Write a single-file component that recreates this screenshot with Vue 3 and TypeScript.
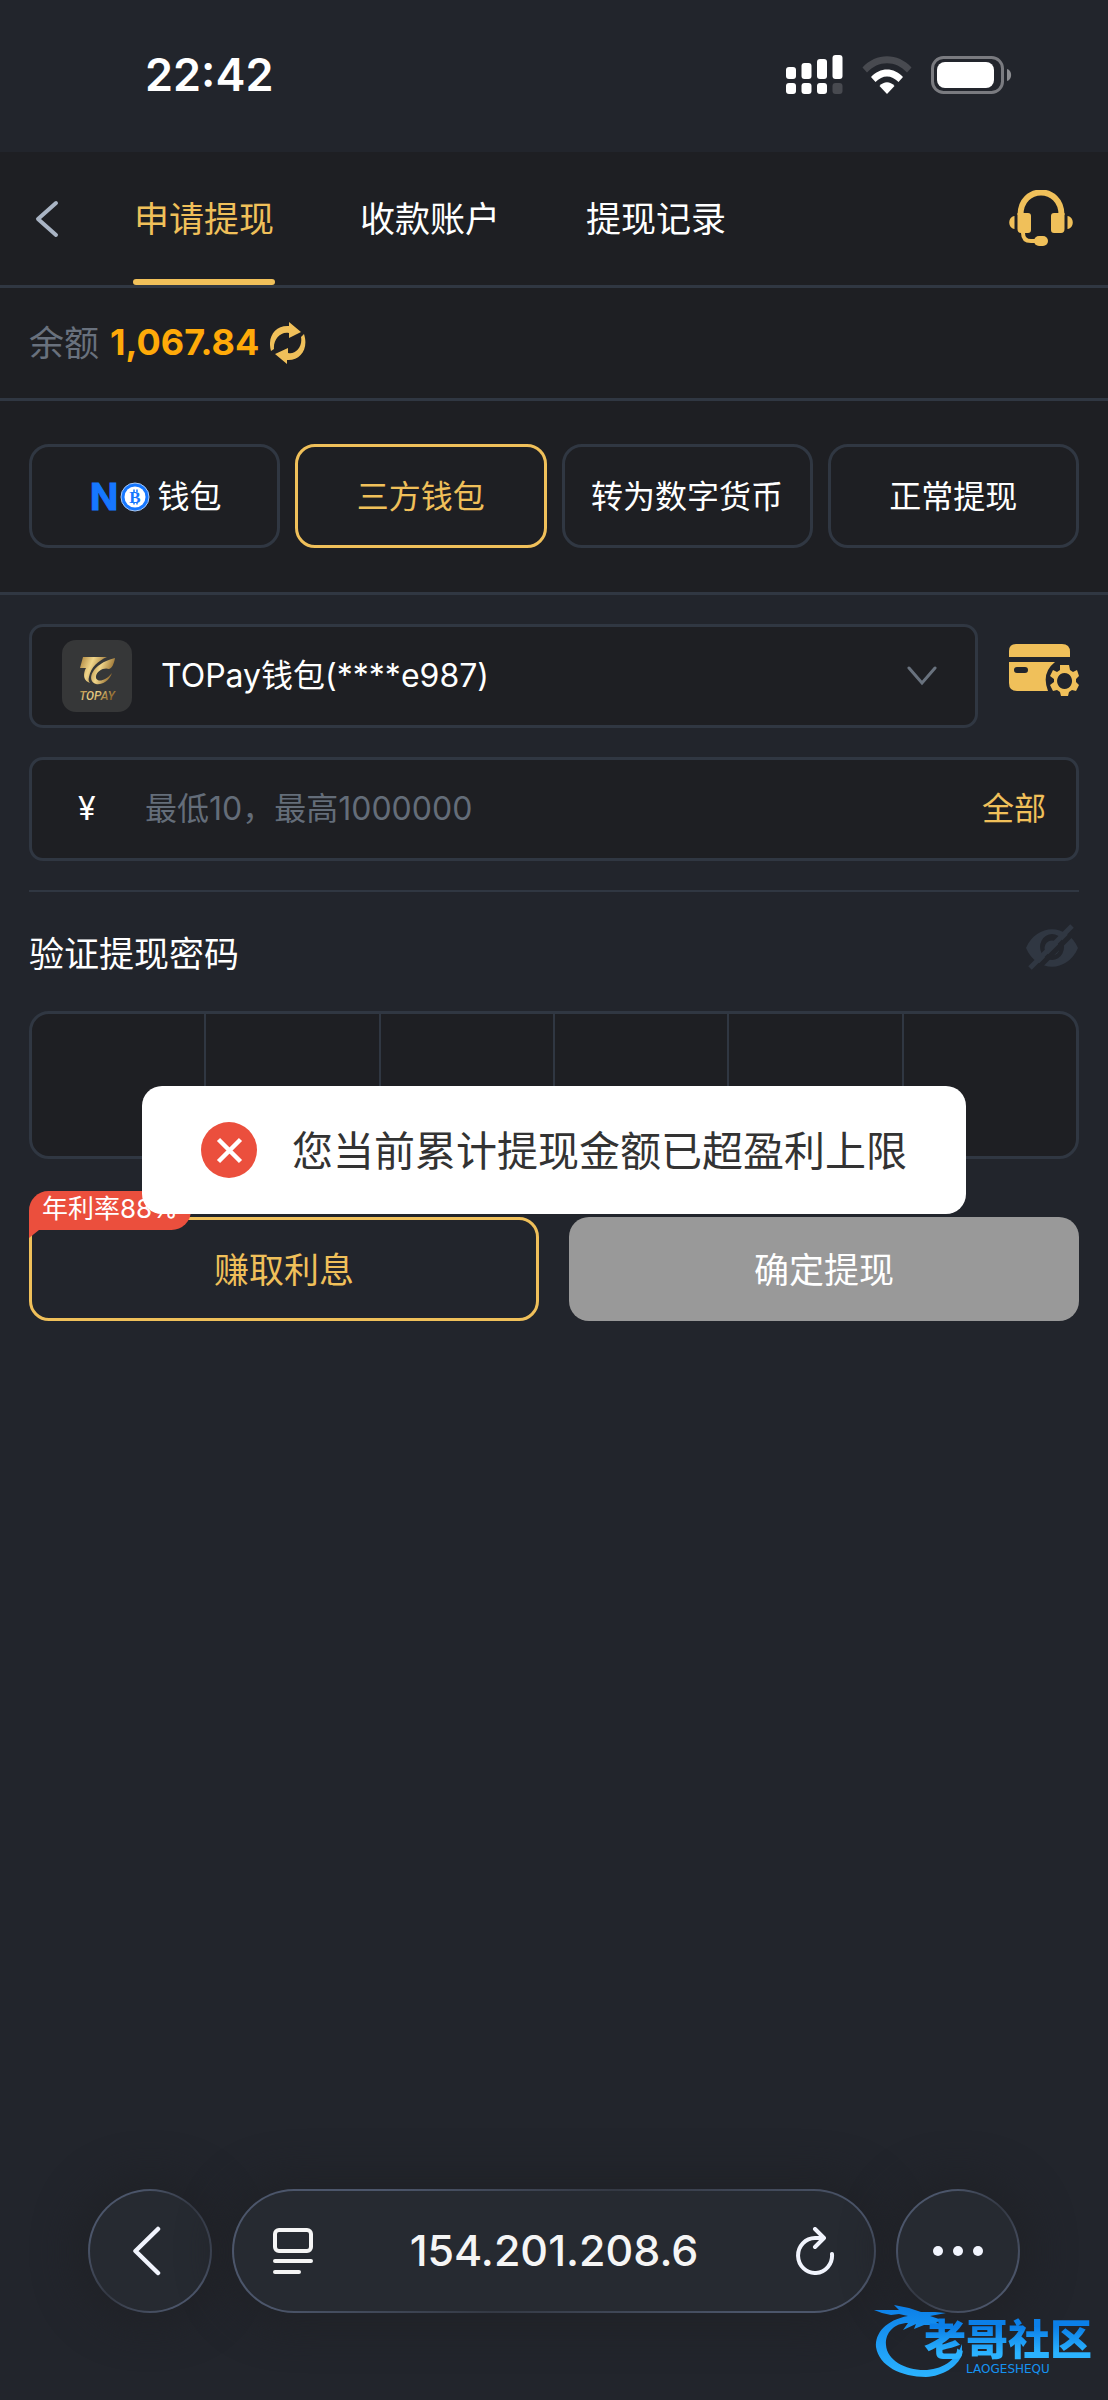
<script setup lang="ts">
import { ref } from 'vue'

interface Choice {
  id: string
  label: string
}

const tabs: Choice[] = [
  { id: 'apply', label: '申请提现' },
  { id: 'account', label: '收款账户' },
  { id: 'history', label: '提现记录' },
]
const methods: Choice[] = [
  { id: 'no', label: '钱包' },
  { id: 'third', label: '三方钱包' },
  { id: 'crypto', label: '转为数字货币' },
  { id: 'normal', label: '正常提现' },
]

const activeTab = ref('apply')
const activeMethod = ref('third')
const wallet = ref('topay')
const amount = ref('')
const pin = ref<string[]>(['', '', '', '', '', ''])
</script>

<template>
  <div class="phone">
    <div class="status">
      <span class="clock">22:42</span>
      <div class="status-icons">
        <svg width="57" height="40" viewBox="0 0 57 40" fill="#fff" aria-hidden="true">
          <rect x="0" y="12" width="10" height="12" rx="3" />
          <rect x="15.500" y="8" width="10" height="16" rx="3" />
          <rect x="31" y="4" width="10" height="20" rx="3" />
          <rect x="46.500" y="0" width="10" height="24" rx="3" />
          <rect x="0" y="28" width="10" height="11" rx="3" />
          <rect x="15.500" y="28" width="10" height="11" rx="3" />
          <rect x="31" y="28" width="10" height="11" rx="3" />
          <rect x="46.500" y="28" width="10" height="11" rx="3" fill="#484a50" />
        </svg>
        <svg width="50" height="38" viewBox="0 0 50 38" aria-hidden="true">
          <path d="M0.500 11.500C14-3.500 36-3.500 49.500 11.500L45 16.500C34 4 16 4 5 16.500Z" fill="#484a50" />
          <path d="M9 21C18 11 32 11 41 21L36.500 26C29.500 18.500 20.500 18.500 13.500 26Z" fill="#fff" />
          <path d="M17.500 30C22 25 28 25 32.500 30L25 38Z" fill="#fff" />
        </svg>
        <svg width="81" height="38" viewBox="0 0 81 38" aria-hidden="true">
          <rect x="1.500" y="1.500" width="70" height="35" rx="11" fill="none" stroke="#7a7b80" stroke-width="3" />
          <rect x="6" y="6" width="57" height="26" rx="8" fill="#fff" />
          <path d="M76 13C81.500 14 81.500 24 76 25Z" fill="#8b8c90" />
        </svg>
      </div>
    </div>

    <main class="view">
      <header class="bar">
        <button class="icon-btn" aria-label="返回">
          <svg width="24" height="38" viewBox="0 0 24 38" fill="none" stroke="#a9b4c4" stroke-width="4" stroke-linecap="round" stroke-linejoin="round">
            <path d="M21 3L3 19L21 35" />
          </svg>
        </button>
        <nav class="tabs">
          <button
            v-for="t in tabs"
            :key="t.id"
            class="tab"
            :class="{ active: t.id === activeTab }"
            @click="activeTab = t.id"
          >{{ t.label }}</button>
        </nav>
        <button class="icon-btn" aria-label="客服">
          <svg width="64" height="58" viewBox="0 0 64 58" fill="#f0c05a">
            <path d="M11.500 25C11.500-5 52.500-5 52.500 25" fill="none" stroke="#f0c05a" stroke-width="6" />
            <path d="M8.500 23H19Q22 23 22 26V40Q22 43 19 43H12Q8.500 43 8.500 39Z" />
            <path d="M55.500 23H45Q42 23 42 26V40Q42 43 45 43H52Q55.500 43 55.500 39Z" />
            <path d="M14 42V43Q14 51 22 51H28" fill="none" stroke="#f0c05a" stroke-width="4" />
            <rect x="25" y="46" width="14" height="10" rx="5" />
            <path d="M5.500 26C-1.500 27-1.500 38 5.500 39Z" />
            <path d="M58.500 26C65.500 27 65.500 38 58.500 39Z" />
          </svg>
        </button>
      </header>

      <section class="balance">
        <span class="muted">余额</span>
        <strong>1,067.84</strong>
        <button class="icon-btn" aria-label="刷新">
          <svg width="36" height="42" viewBox="0 0 36 42" fill="#f0c05a">
            <path d="M1 29C-3 15 5 3 19 4V0L31 10L19 16V11C11 9 3 17 4 27Z" />
            <path d="M34 12C39 27 30 39 17 38V42L5 32L18 26V31C25 33 33 25 31 15Z" />
          </svg>
        </button>
      </section>

      <section class="methods">
        <button
          v-for="m in methods"
          :key="m.id"
          class="method"
          :class="{ active: m.id === activeMethod }"
          @click="activeMethod = m.id"
        >
          <svg v-if="m.id === 'no'" width="62" height="54" viewBox="-4 -12 62 54">
            <text x="-2" y="28" font-size="37" font-weight="700" fill="#1677ff" stroke="#1677ff" stroke-width="1">N</text>
            <circle cx="43" cy="15" r="14" fill="#1677ff" stroke="#a9c9f5" />
            <circle cx="43" cy="15" r="10.500" fill="#fff" />
            <path d="M42 7.500V10M45 7.500V10M42 20V22.500M45 20V22.500" stroke="#1677ff" stroke-width="1.500" />
            <text x="43" y="20.500" text-anchor="middle" class="coin" font-size="17" font-weight="700" fill="#1677ff">B</text>
          </svg>
          <span>{{ m.label }}</span>
        </button>
      </section>

      <form class="form" @submit.prevent>
        <div class="wallet-row">
          <div class="field wallet">
            <svg width="70" height="72" viewBox="0 0 70 72" aria-hidden="true">
              <defs>
                <linearGradient id="gold" x1="0" y1="0" x2="1" y2="0.400">
                  <stop offset="0" stop-color="#a9803a" />
                  <stop offset="0.450" stop-color="#f0d58a" />
                  <stop offset="1" stop-color="#8e6527" />
                </linearGradient>
              </defs>
              <rect width="70" height="72" rx="14" fill="#363738" />
              <path d="M21 17H45C36 21 29 27 27 37C26 40 27 42 28 43C22 41 21 36 23 30L24 28H18Z" fill="url(#gold)" />
              <path d="M53 18C52 24 50 28 47 29C42 27 35 31 34 36C33 42 42 43 50 33C47 42 39 45 34 44C24 41 29 24 53 18Z" fill="url(#gold)" />
              <text x="35" y="60" text-anchor="middle" class="brand-name" font-size="12" font-weight="500" fill="url(#gold)">TOPAY</text>
            </svg>
            <select v-model="wallet" aria-label="提现钱包">
              <option value="topay">TOPay钱包(****e987)</option>
            </select>
            <svg class="caret" width="30" height="20" viewBox="0 0 30 20" fill="none" stroke="#69727e" stroke-width="3" stroke-linecap="round" aria-hidden="true">
              <path d="M2 2L15 17L28 2" />
            </svg>
          </div>
          <button class="icon-btn" type="button" aria-label="管理账户">
            <svg width="70" height="52" viewBox="0 0 70 52" fill="#f0c05a">
              <path d="M0 13V7Q0 0 7 0H53Q61 0 61 8V13Z" />
              <path fill-rule="evenodd" d="M0 18H46Q32 29 39 47H8Q0 47 0 39ZM8 23Q5 23 5 26T8 29H16Q19 29 19 26T16 23Z" />
              <path fill-rule="evenodd" d="M51 21H60L61 26L64 28L68 26L70 32L67 35V38L70 41L67 47L63 46L60 48L59 52H52L51 48L48 46L44 47L41 41L45 38V35L41 32L44 26L48 28L51 26ZM55.500 29A7.500 8 0 1 0 55.600 29Z" />
            </svg>
          </button>
        </div>

        <div class="field amount">
          <label for="amount">¥</label>
          <input id="amount" v-model="amount" type="text" placeholder="最低10，最高1000000" />
          <button class="all" type="button">全部</button>
        </div>

        <hr />

        <div class="pin-head">
          <span id="pin-title">验证提现密码</span>
          <button class="icon-btn" type="button" aria-label="显示密码">
            <svg width="54" height="46" viewBox="0 0 54 46" fill="#303742">
              <path fill-rule="evenodd" d="M1 24C12-1 42-1 53 24C42 49 12 49 1 24ZM27 10A12 13 0 1 0 27.100 10Z" />
              <circle cx="27" cy="24" r="7.500" />
              <path d="M9 48L52 5" stroke="#22252c" stroke-width="5" />
              <path d="M5 44L47 2" stroke="#303742" stroke-width="5" />
            </svg>
          </button>
        </div>

        <div class="pin" role="group" aria-labelledby="pin-title">
          <input
            v-for="(_, i) in pin"
            :key="i"
            v-model="pin[i]"
            type="password"
            maxlength="1"
            inputmode="numeric"
            :aria-label="`密码第${i + 1}位`"
          />
        </div>

        <div class="actions">
          <div class="earn">
            <button class="btn outline" type="button">赚取利息</button>
            <span class="badge">年利率88%</span>
          </div>
          <button class="btn solid" type="submit">确定提现</button>
        </div>
      </form>

      <div class="toast" role="alert">
        <svg width="56" height="56" viewBox="0 0 56 56" aria-hidden="true">
          <circle cx="28" cy="28" r="28" fill="#eb4f3d" />
          <path d="M17.500 17.500L39.500 39.500M39.500 17.500L17.500 39.500" stroke="#fff" stroke-width="4.500" />
        </svg>
        <span>您当前累计提现金额已超盈利上限</span>
      </div>
    </main>

    <footer class="browser">
      <button class="glass round" aria-label="后退">
        <svg width="34" height="50" viewBox="0 0 34 50" fill="none" stroke="#f1f4fd" stroke-width="4.500" stroke-linecap="round" stroke-linejoin="round">
          <path d="M25 3L2.500 25L25 47" />
        </svg>
      </button>
      <div class="glass address">
        <button class="icon-btn" aria-label="页面菜单">
          <svg width="40" height="48" viewBox="0 0 40 48" fill="none" stroke="#f5f5f5" stroke-width="4" stroke-linecap="round">
            <rect x="2" y="3" width="36" height="21" rx="4" />
            <path d="M2 34H38M2 45H26" />
          </svg>
        </button>
        <span>154.201.208.6</span>
        <button class="icon-btn" aria-label="重新加载">
          <svg width="40" height="48" viewBox="0 0 40 48" fill="none" stroke="#f1f4fd" stroke-width="4" stroke-linecap="round" stroke-linejoin="round">
            <path d="M20 2L29 11L20 20M28 11H20A17 17.500 0 1 0 37 27" />
          </svg>
        </button>
      </div>
      <button class="glass round" aria-label="更多">
        <svg width="52" height="12" viewBox="0 0 52 12" fill="#f1f4fd">
          <circle cx="6" cy="6" r="5" />
          <circle cx="26" cy="6" r="5" />
          <circle cx="46" cy="6" r="5" />
        </svg>
      </button>
    </footer>

    <div class="mark">
      <svg width="92" height="74" viewBox="0 0 92 74" aria-hidden="true">
        <defs>
          <linearGradient id="blue" x1="0" y1="0" x2="0" y2="1">
            <stop offset="0" stop-color="#0b7fe8" />
            <stop offset="1" stop-color="#2bb3ff" />
          </linearGradient>
        </defs>
        <path d="M34 12C12 16 1 29 2 43C5 62 27 73 52 73C69 72 83 63 88 51V40C82 57 67 66 50 66C31 66 13 56 12 41C11 28 21 19 34 19L29 26L42 20L40 25L50 21L66 21L62 18L71 17L56 12L72 9L61 8L47 8L35 4L20 1L25 6H16L0 6L8 9L17 11L25 10Z" fill="url(#blue)" />
      </svg>
      <div class="mark-text">
        <b>老哥社区</b>
        <small>LAOGESHEQU</small>
      </div>
    </div>
  </div>
</template>

<style>
body {
  background: #22252c;
}
</style>

<style scoped>
* {
  box-sizing: border-box;
}

.phone {
  position: relative;
  display: flex;
  flex-direction: column;
  min-height: 100vh;
  background: #22252c;
  color: #fff;
  font-family: Inter, "Noto Sans CJK SC", sans-serif;
  font-size: 32px;
  line-height: 1.2;
}

button,
input,
select {
  padding: 0;
  border: 0;
  border-radius: 0;
  outline: 0;
  background: none;
  color: inherit;
  font: inherit;
}

svg {
  display: block;
  flex: none;
}

.status {
  display: flex;
  align-items: center;
  justify-content: space-between;
  height: 152px;
  padding: 0 96px 2px 145px;
}

.clock {
  font-size: 45px;
  font-weight: 600;
}

.status-icons {
  display: flex;
  align-items: center;
  gap: 19px;
}

.view {
  position: relative;
  flex: 1;
}

.bar {
  display: flex;
  align-items: stretch;
  height: 136px;
  padding: 0 35px;
  border-bottom: 3px solid #303742;
  background: #1e1f23;
}

.icon-btn {
  display: flex;
  flex: none;
  align-items: center;
}

.tabs {
  display: flex;
  flex: 1;
  gap: 84px;
  margin-left: 74px;
}

.tab {
  padding: 0 1px;
  border-top: 6px solid transparent;
  border-bottom: 6px solid transparent;
  font-size: 35px;
}

.tab.active {
  position: relative;
  color: #f0c05a;
}

.tab.active::after {
  content: "";
  position: absolute;
  right: 0;
  bottom: -6px;
  left: 0;
  height: 6px;
  border-radius: 3px;
  background: #f0c05a;
}

.balance {
  display: flex;
  align-items: center;
  gap: 11px;
  height: 113px;
  padding: 0 29px;
  border-bottom: 3px solid #303742;
  background: #1e1f23;
  font-size: 35px;
}

.muted {
  color: #69717d;
}

.balance strong {
  color: #ffaa09;
  font-size: 36px;
  font-weight: 700;
}

.methods {
  display: grid;
  grid-template-columns: repeat(4, 1fr);
  gap: 15px;
  padding: 43px 29px 44px;
  border-bottom: 3px solid #303742;
  background: #1e1f23;
}

.method {
  display: flex;
  align-items: center;
  justify-content: center;
  gap: 8px;
  height: 104px;
  padding-top: 2px;
  border: 3px solid #303742;
  border-radius: 20px;
  white-space: nowrap;
}

.method.active {
  border-color: #f0c05a;
  color: #f0c05a;
}

.coin {
  font-family: "Liberation Serif", serif;
}

.form {
  padding: 29px;
}

.wallet-row {
  display: flex;
  align-items: center;
  gap: 31px;
}

.wallet-row .icon-btn {
  padding-bottom: 12px;
}

.field {
  display: flex;
  align-items: center;
  height: 104px;
  border: 3px solid #303742;
  border-radius: 14px;
  background: #1e1f23;
}

.wallet {
  position: relative;
  flex: 1;
  padding-left: 30px;
}

.wallet select {
  position: absolute;
  inset: 0;
  width: 100%;
  padding-left: 129px;
  appearance: none;
}

.wallet option {
  background: #1e1f23;
}

.brand-name {
  font-family: Roboto, sans-serif;
  font-style: italic;
}

.caret {
  margin-right: 38px;
  margin-left: auto;
}

.amount {
  margin-top: 29px;
  padding: 0 30px 0 46px;
}

.amount label {
  width: 67px;
}

.amount input {
  flex: 1;
  min-width: 0;
}

.amount input::placeholder {
  color: #646d79;
  opacity: 1;
}

.all {
  color: #f0c05a;
}

hr {
  height: 2px;
  margin: 29px 0 0;
  border: 0;
  background: #303742;
}

.pin-head {
  display: flex;
  align-items: flex-start;
  justify-content: space-between;
  height: 119px;
  padding-top: 32px;
  font-size: 35px;
  line-height: 60px;
}

.pin {
  display: flex;
  height: 148px;
  overflow: hidden;
  border: 3px solid #303742;
  border-radius: 20px;
  background: #1e1f23;
}

.pin input {
  flex: 1;
  min-width: 0;
  text-align: center;
}

.pin input + input {
  border-left: 2px solid #303742;
}

.actions {
  display: flex;
  gap: 30px;
  margin-top: 58px;
}

.earn,
.solid {
  position: relative;
  flex: 1;
}

.btn {
  width: 100%;
  height: 104px;
  padding-top: 2px;
  border-radius: 20px;
  font-size: 35px;
}

.outline {
  border: 3px solid #f0c05a;
  color: #f0c05a;
}

.solid {
  background: #999;
}

.badge {
  position: absolute;
  top: -26px;
  left: 0;
  height: 39px;
  padding: 0 13px;
  border-radius: 20px 20px 20px 0;
  background: #eb4f3d;
  font-size: 26px;
  line-height: 35px;
}

.badge::after {
  content: "";
  position: absolute;
  top: 100%;
  left: 0;
  border-top: 8px solid #eb4f3d;
  border-right: 10px solid transparent;
}

.toast {
  position: absolute;
  top: 50%;
  left: 50%;
  display: flex;
  align-items: center;
  gap: 35px;
  height: 128px;
  padding: 0 59px;
  transform: translate(-50%, -50%);
  border-radius: 20px;
  background: #fff;
  color: #333;
  font-size: 41px;
  white-space: nowrap;
}

.toast span {
  padding-top: 3px;
}

.browser {
  display: flex;
  gap: 20px;
  padding: 41px 88px 87px;
}

.glass {
  display: flex;
  align-items: center;
  height: 124px;
  border: 2px solid transparent;
  border-radius: 62px;
  background:
    linear-gradient(#262a31, #262a31) padding-box,
    linear-gradient(135deg, #4c566b 20%, #343944 50%, #4c566b 85%) border-box;
  box-shadow: 0 0 40px 12px #202227;
}

.round {
  justify-content: center;
  width: 124px;
}

.address {
  flex: 1;
  justify-content: space-between;
  padding: 0 39px;
  color: #f5f5f5;
  font-size: 43px;
  font-weight: 500;
}

.mark {
  position: absolute;
  right: 16px;
  bottom: 22px;
  display: flex;
}

.mark-text {
  display: flex;
  flex-direction: column;
  align-items: center;
  margin-left: -42px;
  padding-top: 14px;
  color: #1593f2;
}

.mark-text b {
  background: linear-gradient(#0b7fe8 20%, #2bb3ff 80%);
  background-clip: text;
  color: transparent;
  font-size: 42px;
  font-weight: 900;
  line-height: 44px;
}

.mark-text small {
  font-family: "DejaVu Sans", sans-serif;
  font-size: 12px;
  line-height: 14px;
}
</style>
